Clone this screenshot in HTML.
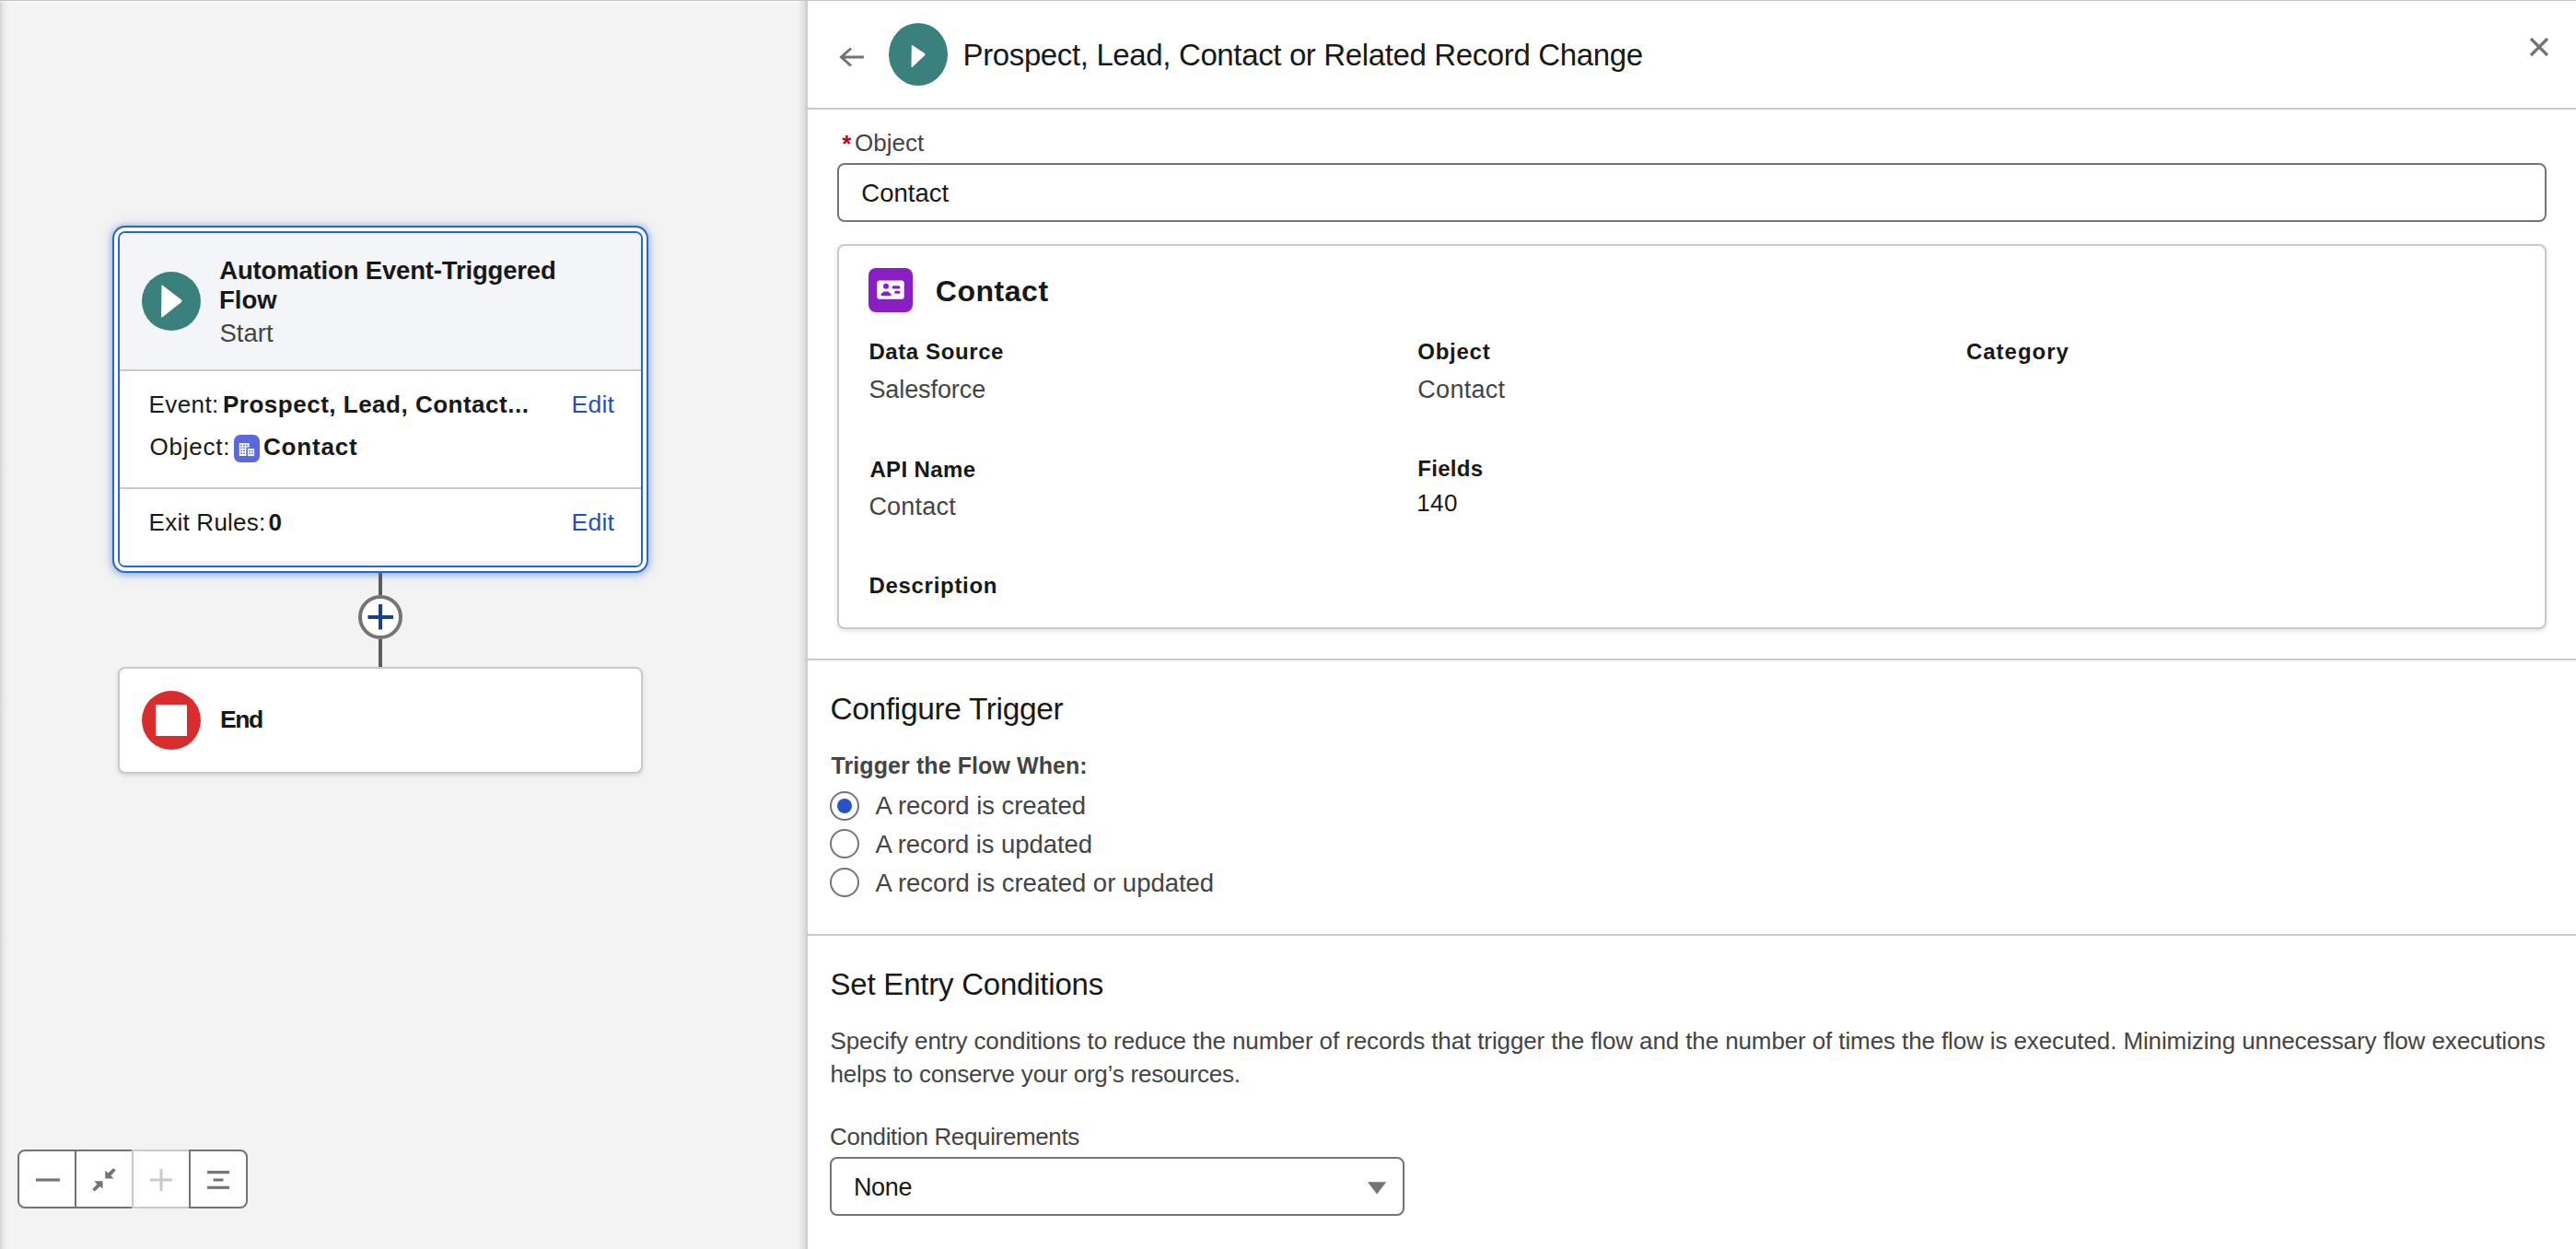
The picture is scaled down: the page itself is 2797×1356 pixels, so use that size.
<!DOCTYPE html>
<html><head><meta charset="utf-8"><title>Flow Builder</title>
<style>
html,body{margin:0;padding:0;}
body{width:2797px;height:1356px;position:relative;overflow:hidden;background:#fff;font-family:"Liberation Sans",sans-serif;}
.t{position:absolute;white-space:pre;line-height:1.2;}
svg{display:block;}
</style></head><body>
<div style="position:absolute;left:0px;top:0px;width:876px;height:1356px;background:#f3f3f3;"></div>
<div style="position:absolute;left:0px;top:0px;width:10px;height:1356px;background:linear-gradient(to right,rgba(0,0,0,0.13),rgba(0,0,0,0.04) 40%,rgba(0,0,0,0));"></div>
<div style="position:absolute;left:0px;top:1px;width:876px;height:4px;background:linear-gradient(to bottom,rgba(255,255,255,0.5),rgba(255,255,255,0));"></div>
<div style="position:absolute;left:866px;top:0px;width:10px;height:1356px;background:linear-gradient(to right,rgba(0,0,0,0),rgba(0,0,0,0.05) 50%,rgba(0,0,0,0.14));"></div>
<div style="position:absolute;left:876px;top:0px;width:1px;height:1356px;background:#c9c9c9;"></div>
<div style="position:absolute;left:0px;top:0px;width:2797px;height:1px;background:#c4c4c4;"></div>
<div style="position:absolute;left:128px;top:251px;width:570px;height:365px;box-sizing:border-box;border:2px solid #2468cd;border-radius:8px;background:#fff;box-shadow:0 0 0 4px #fff,0 0 0 6px #2468cd,0 1px 6px 7px rgba(30,100,205,0.38),0 1px 14px 8px rgba(30,100,205,0.16);overflow:hidden;"></div>
<div style="position:absolute;left:130px;top:253px;width:566px;height:148px;background:#f3f5f9;border-radius:6px 6px 0 0;"></div>
<div style="position:absolute;left:130px;top:401px;width:566px;height:2px;background:#c9c9c9;"></div>
<div style="position:absolute;left:130px;top:529px;width:566px;height:2px;background:#c9c9c9;"></div>
<div style="position:absolute;left:130px;top:609px;width:566px;height:5px;background:#f3f5f9;border-radius:0 0 6px 6px;"></div>
<svg style="position:absolute;left:154px;top:295px" width="64" height="64" viewBox="0 0 64 64"><circle cx="32" cy="32" r="32" fill="#3a807c"/><path d="M21.5 15.5 Q21 14 22.5 14.8 L43 30.6 Q44.2 31.8 43 33 L22.5 49.2 Q21 50 21 48.5 Z" fill="#fff"/></svg>
<div style="position:absolute;left:411px;top:622px;width:4px;height:24px;background:#5c5c5c;"></div>
<div style="position:absolute;left:411px;top:694px;width:4px;height:30px;background:#5c5c5c;"></div>
<svg style="position:absolute;left:389px;top:646px" width="48" height="48" viewBox="0 0 48 48"><circle cx="24" cy="24" r="22" fill="#fff" stroke="#747474" stroke-width="4"/><rect x="10.5" y="22" width="27.5" height="4" fill="#16418c"/><rect x="22" y="10" width="4" height="27.5" fill="#16418c"/></svg>
<div style="position:absolute;left:128px;top:724px;width:570px;height:116px;box-sizing:border-box;border:2px solid #c9c9c9;border-radius:8px;background:#fff;box-shadow:0 2px 5px rgba(0,0,0,0.12);"></div>
<svg style="position:absolute;left:154px;top:750px" width="64" height="64" viewBox="0 0 64 64"><circle cx="32" cy="32" r="32" fill="#d92c2c"/><rect x="15" y="15" width="34" height="34" fill="#fff"/></svg>
<div style="position:absolute;left:19px;top:1248px;width:250px;height:64px;box-sizing:border-box;border:2px solid #747474;border-radius:8px;background:#fff;"></div>
<div style="position:absolute;left:143px;top:1248px;width:64px;height:2px;background:#c9c9c9;"></div>
<div style="position:absolute;left:143px;top:1310px;width:64px;height:2px;background:#c9c9c9;"></div>
<div style="position:absolute;left:81px;top:1248px;width:2px;height:64px;background:#747474;"></div>
<div style="position:absolute;left:143px;top:1250px;width:2px;height:60px;background:#c9c9c9;"></div>
<div style="position:absolute;left:205px;top:1248px;width:2px;height:64px;background:#747474;"></div>
<svg style="position:absolute;left:0;top:1240px" width="280" height="80" viewBox="0 1240 280 80"><rect x="39" y="1279.4" width="26" height="3.2" fill="#747474"/><path d="M102.35 1282.3 L111.57 1282.3 L111.57 1290.8 L108.8 1288.1 L102.8 1293.6 L100.2 1291.1 L105.4 1285.8 Z" fill="#747474"/><path d="M114.2 1270.9 L114.2 1279.6 L123.5 1279.6 L120.4 1276.4 L125.7 1270.5 L123.1 1268.2 L117.5 1273.5 Z" fill="#747474"/><line x1="175" y1="1269" x2="175" y2="1293" stroke="#c9c9c9" stroke-width="3"/><line x1="163" y1="1281" x2="187" y2="1281" stroke="#c9c9c9" stroke-width="3"/><rect x="225" y="1271.1" width="24" height="3.2" fill="#747474"/><rect x="231.5" y="1279.5" width="11" height="3" fill="#747474"/><rect x="225" y="1287.7" width="24" height="3.2" fill="#747474"/></svg>
<svg style="position:absolute;left:254px;top:472px" width="28" height="30" viewBox="0 0 28 30"><rect x="0" y="0" width="28" height="30" rx="7" fill="#5a68e0"/><path d="M5.8 9 H16.6 V13.6 H13.3 V23.1 H5.8 Z" fill="#fff"/><rect x="14.9" y="15" width="7.2" height="8.1" fill="#fff"/><g fill="#5a68e0"><rect x="7.2" y="10.7" width="1.6" height="1.6"/><rect x="10.2" y="10.7" width="1.6" height="1.6"/><rect x="13.2" y="10.7" width="1.6" height="1.6"/><rect x="7.2" y="13.5" width="1.6" height="1.6"/><rect x="10.2" y="13.5" width="1.6" height="1.6"/><rect x="7.2" y="16.5" width="1.6" height="1.6"/><rect x="10.2" y="16.5" width="1.6" height="1.6"/><rect x="7.2" y="19.4" width="1.6" height="1.6"/><rect x="10.2" y="19.4" width="1.6" height="1.6"/><rect x="16.4" y="16.8" width="1.6" height="1.6"/><rect x="19.2" y="16.8" width="1.6" height="1.6"/><rect x="16.4" y="19.6" width="1.6" height="1.6"/><rect x="19.2" y="19.6" width="1.6" height="1.6"/></g></svg>
<div style="position:absolute;left:877px;top:1px;width:1920px;height:1355px;background:#fff;"></div>
<div style="position:absolute;left:877px;top:117px;width:1920px;height:2px;background:#c9c9c9;"></div>
<svg style="position:absolute;left:905px;top:45px" width="40" height="34" viewBox="905 45 40 34"><path d="M924 52.5 L913.5 62 L924 71.5 M913.5 62 H938" fill="none" stroke="#747474" stroke-width="3" stroke-linejoin="miter"/></svg>
<svg style="position:absolute;left:965px;top:25px" width="64" height="68" viewBox="0 0 64 68"><ellipse cx="32" cy="34" rx="32" ry="34" fill="#3a807c"/><path d="M24.8 25 Q24.5 23.5 25.8 24.3 L39.2 33 Q40 34 39.2 35 L25.8 47.8 Q24.5 48.6 24.5 47 Z" fill="#fff"/></svg>
<svg style="position:absolute;left:2740px;top:34px" width="34" height="34" viewBox="2740 34 34 34"><path d="M2748 42 L2766 60 M2766 42 L2748 60" stroke="#747474" stroke-width="3.2" stroke-linecap="butt"/></svg>
<div style="position:absolute;left:909px;top:177px;width:1856px;height:64px;box-sizing:border-box;border:2px solid #747474;border-radius:8px;background:#fff;"></div>
<div style="position:absolute;left:909px;top:265px;width:1856px;height:418px;box-sizing:border-box;border:2px solid #c9c9c9;border-radius:8px;background:#fff;box-shadow:0 2px 5px rgba(0,0,0,0.12);"></div>
<svg style="position:absolute;left:943px;top:291px" width="48" height="48" viewBox="0 0 48 48"><rect width="48" height="48" rx="8" fill="#8a1dc4"/><rect x="9.3" y="13.6" width="29.4" height="20.1" rx="2.6" fill="#fff"/><circle cx="19" cy="19.7" r="3" fill="#8a1dc4"/><path d="M13.6 29.9 L13.6 28.6 Q14.2 27 16.8 25.4 L21.2 25.4 Q23.8 27 24.5 28.6 L24.5 29.9 Z" fill="#8a1dc4"/><rect x="25.6" y="19.3" width="8.8" height="3.2" rx="1.6" fill="#8a1dc4"/><rect x="28.2" y="24.7" width="6.2" height="3" rx="1.5" fill="#8a1dc4"/></svg>
<div style="position:absolute;left:877px;top:715px;width:1920px;height:2px;background:#c9c9c9;"></div>
<div style="position:absolute;left:901px;top:859px;width:32px;height:32px;box-sizing:border-box;border:2px solid #747474;border-radius:50%;background:#fff;"></div>
<div style="position:absolute;left:901px;top:900px;width:32px;height:32px;box-sizing:border-box;border:2px solid #747474;border-radius:50%;background:#fff;"></div>
<div style="position:absolute;left:901px;top:942px;width:32px;height:32px;box-sizing:border-box;border:2px solid #747474;border-radius:50%;background:#fff;"></div>
<div style="position:absolute;left:909px;top:867px;width:16px;height:16px;border-radius:50%;background:#2454c8;"></div>
<div style="position:absolute;left:877px;top:1014px;width:1920px;height:2px;background:#c9c9c9;"></div>
<div style="position:absolute;left:901px;top:1256px;width:624px;height:64px;box-sizing:border-box;border:2px solid #747474;border-radius:8px;background:#fff;"></div>
<svg style="position:absolute;left:1480px;top:1280px" width="30" height="20" viewBox="1480 1280 30 20"><path d="M1485 1283.3 L1505.2 1283.3 L1495.1 1296.6 Z" fill="#747474"/></svg>
<div class="t" style="left:238.3px;top:277px;font-size:27.5px;color:#181818;font-weight:700;letter-spacing:-0.172px;">Automation Event-Triggered</div>
<div class="t" style="left:238.0px;top:309px;font-size:27.5px;color:#181818;font-weight:700;">Flow</div>
<div class="t" style="left:238.5px;top:345px;font-size:27.5px;color:#444444;">Start</div>
<div class="t" style="left:161.6px;top:424px;font-size:26px;color:#181818;letter-spacing:0.4px;">Event:</div>
<div class="t" style="left:242.0px;top:424px;font-size:26px;color:#181818;font-weight:700;letter-spacing:0.504px;">Prospect, Lead, Contact...</div>
<div class="t" style="left:620.6px;top:423.6px;font-size:26.5px;color:#1f50c8;letter-spacing:0.2px;">Edit</div>
<div class="t" style="left:162.6px;top:470.4px;font-size:26px;color:#181818;letter-spacing:0.733px;">Object:</div>
<div class="t" style="left:286.0px;top:470.4px;font-size:26px;color:#181818;font-weight:700;letter-spacing:0.833px;">Contact</div>
<div class="t" style="left:161.6px;top:551.6px;font-size:26px;color:#181818;letter-spacing:0.24px;">Exit Rules:</div>
<div class="t" style="left:291.4px;top:551.6px;font-size:26px;color:#181818;font-weight:700;">0</div>
<div class="t" style="left:620.6px;top:551.8px;font-size:26.5px;color:#1f50c8;letter-spacing:0.2px;">Edit</div>
<div class="t" style="left:239.1px;top:765.8px;font-size:26.5px;color:#181818;font-weight:700;letter-spacing:-1.45px;">End</div>
<div class="t" style="left:1045.5px;top:39.8px;font-size:33px;color:#181818;letter-spacing:-0.368px;">Prospect, Lead, Contact or Related Record Change</div>
<div class="t" style="left:914.2px;top:141px;font-size:26px;color:#ba0517;font-weight:700;">*</div>
<div class="t" style="left:928.0px;top:140.1px;font-size:26px;color:#444444;">Object</div>
<div class="t" style="left:935.3px;top:192.9px;font-size:27.5px;color:#181818;letter-spacing:0.017px;">Contact</div>
<div class="t" style="left:1015.8px;top:296.5px;font-size:32px;color:#181818;font-weight:700;letter-spacing:0.533px;">Contact</div>
<div class="t" style="left:943.4px;top:367.6px;font-size:24px;color:#181818;font-weight:700;letter-spacing:0.6px;">Data Source</div>
<div class="t" style="left:943.4px;top:406.8px;font-size:27px;color:#444444;letter-spacing:-0.089px;">Salesforce</div>
<div class="t" style="left:1539.3px;top:368.3px;font-size:24px;color:#181818;font-weight:700;letter-spacing:0.74px;">Object</div>
<div class="t" style="left:1539.3px;top:406.6px;font-size:27px;color:#444444;letter-spacing:0.283px;">Contact</div>
<div class="t" style="left:2135.0px;top:367.6px;font-size:24px;color:#181818;font-weight:700;letter-spacing:0.971px;">Category</div>
<div class="t" style="left:944.4px;top:495.5px;font-size:24px;color:#181818;font-weight:700;letter-spacing:0.371px;">API Name</div>
<div class="t" style="left:943.4px;top:534px;font-size:27px;color:#444444;letter-spacing:0.233px;">Contact</div>
<div class="t" style="left:1539.3px;top:494.8px;font-size:24px;color:#181818;font-weight:700;letter-spacing:0.3px;">Fields</div>
<div class="t" style="left:1538.3px;top:530.7px;font-size:26px;color:#181818;letter-spacing:0.35px;">140</div>
<div class="t" style="left:943.4px;top:622.4px;font-size:24px;color:#181818;font-weight:700;letter-spacing:0.71px;">Description</div>
<div class="t" style="left:901.5px;top:750.3px;font-size:33.5px;color:#181818;letter-spacing:-0.356px;">Configure Trigger</div>
<div class="t" style="left:902.5px;top:816px;font-size:25px;color:#444444;font-weight:700;letter-spacing:0.086px;">Trigger the Flow When:</div>
<div class="t" style="left:950.5px;top:857.8px;font-size:27.5px;color:#444444;letter-spacing:-0.044px;">A record is created</div>
<div class="t" style="left:950.5px;top:899.9px;font-size:27.5px;color:#444444;letter-spacing:-0.083px;">A record is updated</div>
<div class="t" style="left:950.5px;top:941.8px;font-size:27.5px;color:#444444;letter-spacing:-0.028px;">A record is created or updated</div>
<div class="t" style="left:901.5px;top:1049px;font-size:33px;color:#181818;letter-spacing:-0.216px;">Set Entry Conditions</div>
<div class="t" style="left:901.5px;top:1114.8px;font-size:26px;color:#444444;letter-spacing:-0.111px;">Specify entry conditions to reduce the number of records that trigger the flow and the number of times the flow is executed. Minimizing unnecessary flow executions</div>
<div class="t" style="left:901.5px;top:1151px;font-size:26px;color:#444444;letter-spacing:-0.203px;">helps to conserve your org’s resources.</div>
<div class="t" style="left:901.0px;top:1219px;font-size:26px;color:#444444;letter-spacing:-0.362px;">Condition Requirements</div>
<div class="t" style="left:926.9px;top:1272.9px;font-size:27px;color:#181818;letter-spacing:-0.3px;">None</div>
</body></html>
